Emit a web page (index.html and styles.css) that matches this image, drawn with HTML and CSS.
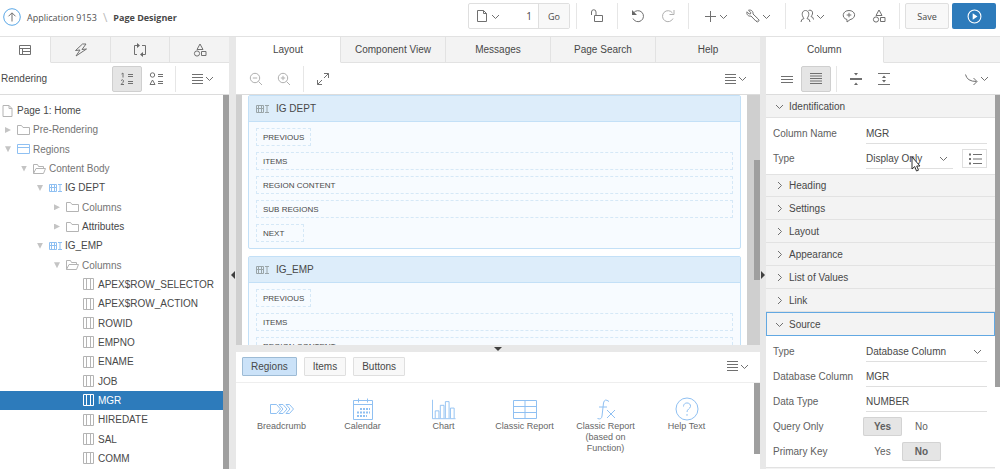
FILE: index.html
```html
<!DOCTYPE html>
<html lang="en">
  <head>
    <meta charset="UTF-8" />
    <meta name="viewport" content="width=device-width, initial-scale=1.0" />
    <title>Page Designer</title>
    <link rel="stylesheet" href="styles.css">
  </head>
  <body>
    <svg class="sprite" aria-hidden="true">
      <symbol id="chevron" viewBox="0 0 9 9"><path d="M1 3l3.500 3.500L8 3" /></symbol>
      <symbol id="page" viewBox="0 0 12 14"><path d="M1.500 1.500h6l3 3v8h-9zM7.500 1.500v3h3" /></symbol>
      <symbol id="menu" viewBox="0 0 12 12"><path d="M1 1.500h11M1 4.500h11M1 7.500h11M1 10.500h11" /></symbol>
      <symbol id="shapes" viewBox="0 0 14 14"><path d="M7 1l3 5.500H4zM8.500 8.500h4.500v4H8.500z" /><circle cx="4" cy="10.500" r="2.600" /></symbol>
      <symbol id="folder" viewBox="0 0 13 12"><path d="M.5 10.500v-9h4l1.500 2h6.500v7z" /></symbol>
      <symbol id="folder-open" viewBox="0 0 13 12"><path d="M.5 10.500v-9h4l1 2h5v2M.5 10.500L3 5.500h9.500l-2 5z" /></symbol>
      <symbol id="region" viewBox="0 0 13 12"><path d="M.5 1.500h12v9H.5zM.5 4.500h12" /></symbol>
      <symbol id="grid" viewBox="0 0 13 12"><path d="M.5 2.500h7v7h-7zM.5 5.500h7M2.500 2.500v7M5.500 2.500v7M9 2.500h4M9 9.500h4M11 2.500v7" /></symbol>
      <symbol id="column" viewBox="0 0 13 12"><path d="M1.500 .5h10v11h-10zM4.500 .5v11M8.500 .5v11" /></symbol>
    </svg>

    <header class="header">
      <nav class="breadcrumb">
        <a class="up" href="#" aria-label="Up">
          <svg viewBox="0 0 18 18"><circle cx="9" cy="9" r="8.300" /><path d="M9 13.500V5M5.500 8.300L9 4.800l3.500 3.500" /></svg>
        </a>
        <a href="#">Application 9153</a>
        <span class="slash">\</span>
        <strong>Page Designer</strong>
      </nav>

      <div class="actions">
        <div class="page-select">
          <button class="page-menu" aria-label="Page finder">
            <svg class="icon"><use href="#page" /></svg><svg class="chev"><use href="#chevron" /></svg>
          </button>
          <input class="page-number" type="text" value="1" aria-label="Page number" />
          <button class="go">Go</button>
        </div>
        <span class="sep"></span>
        <button class="tool" aria-label="Lock"><svg class="icon" viewBox="0 0 14 14"><path d="M4.500 6.500h8v6h-8zM1.500 6V3a2 2 0 0 1 4.500 0v3.500" /></svg></button>
        <span class="sep"></span>
        <button class="tool" aria-label="Undo"><svg class="icon" viewBox="0 0 14 14"><path d="M2.500 4A5.500 5.500 0 1 1 2 9.500" /><path class="fill" d="M1 1v5h5z" /></svg></button>
        <button class="tool faded" aria-label="Redo"><svg class="icon" viewBox="0 0 14 14"><path d="M11.500 4A5.500 5.500 0 1 0 12 9.500M13 1v4.500H8.500" /></svg></button>
        <span class="sep"></span>
        <button class="tool-menu" aria-label="Create"><svg class="icon" viewBox="0 0 14 14"><path d="M2 7.500h11M7.500 2v11" /></svg><svg class="chev"><use href="#chevron" /></svg></button>
        <button class="tool-menu" aria-label="Utilities"><svg class="icon" viewBox="0 0 14 14"><path d="M2.500 1.300L4.800 3.500 4.500 4.800 3.200 5 1 2.800C.2 5.500 2.500 7.700 5 7L10 12.200Q11.500 13.500 12.600 12.300T12.200 10L7 5C7.500 2.500 5.200.3 2.500 1.300zM11 11.200v.5" /></svg><svg class="chev"><use href="#chevron" /></svg></button>
        <span class="sep"></span>
        <button class="tool-menu" aria-label="Team"><svg class="icon" viewBox="0 0 14 14"><path d="M1 13q0-3 3-3.500C1 6 2 1.500 5.500 1.500S10 6 7 9.500q3 .5 3 3.500M8.500 1.500c4-1.500 5.500 3 2.500 6q2.500.5 2.500 3" /></svg><svg class="chev"><use href="#chevron" /></svg></button>
        <button class="tool" aria-label="Comments"><svg class="icon" viewBox="0 0 14 14"><path d="M5 10.500C-1 9 .5 1.500 7 1.500s8 7.500 1 9.200L5 13zM7 3.800v4.500M4.700 6h4.600" /></svg></button>
        <button class="tool" aria-label="Shared components"><svg class="icon"><use href="#shapes" /></svg></button>
        <span class="sep"></span>
        <button class="save">Save</button>
        <button class="run" aria-label="Save and run page"><svg viewBox="0 0 14 14"><circle cx="7" cy="7" r="6" /><path class="fill" d="M5.300 4v6l4.500-3z" /></svg></button>
      </div>
    </header>

    <main class="designer">
      <section class="panel side">
        <div class="tabs icon-tabs">
          <button class="tab active" aria-label="Rendering"><svg class="icon" viewBox="0 0 14 14"><path d="M1.500 2.500h11v9h-11zM1.500 5.500h11M4.500 5.500v6M4.500 8.500h8" /></svg></button>
          <button class="tab" aria-label="Dynamic Actions"><svg class="icon" viewBox="0 0 14 14"><path d="M8.500 1L1.500 7.500l4.500-.5-4 6L12.500 6 8 6.500 12 1z" /></svg></button>
          <button class="tab" aria-label="Processing"><svg class="icon" viewBox="0 0 14 14"><path d="M5 2.500H1.500v9H4M9 2.500h3.500v9H9" /><path class="fill" d="M4 0v5l3-2.500zM10 9v5l-3-2.500z" /></svg></button>
          <button class="tab" aria-label="Shared Components"><svg class="icon"><use href="#shapes" /></svg></button>
        </div>
        <div class="toolbar tree-tools">
          <h2>Rendering</h2>
          <button class="tool push pressed" aria-label="Group by order">
            <svg class="icon" viewBox="0 0 14 14"><path d="M1.500 2L3 1v4.500M1 8.500q2-1.500 2.500 0T1 12.500h3M8 2.500h5M8 4.500h5M8 9.500h5M8 11.500h5" /></svg>
          </button>
          <button class="tool" aria-label="Group by component type">
            <svg class="icon" viewBox="0 0 14 14"><circle cx="3.500" cy="3" r="2.200" /><path d="M3.500 8L6 12.500H1zM9 2.500h5M9 4.500h5M9 9.500h5M9 11.500h5" /></svg>
          </button>
          <span class="sep"></span>
          <button class="tool-menu" aria-label="Tree menu"><svg class="icon small"><use href="#menu" /></svg><svg class="chev"><use href="#chevron" /></svg></button>
        </div>
        <div class="tree-wrap">
          <ul class="tree" role="tree">
            <li class="root" role="treeitem"><svg class="node"><use href="#page" /></svg>Page 1: Home</li>
            <li class="level-1 muted" role="treeitem"><i class="arrow"></i><svg class="node"><use href="#folder" /></svg>Pre-Rendering</li>
            <li class="level-1 muted" role="treeitem"><i class="arrow open"></i><svg class="node blue"><use href="#region" /></svg>Regions</li>
            <li class="level-2 muted" role="treeitem"><i class="arrow open"></i><svg class="node"><use href="#folder-open" /></svg>Content Body</li>
            <li class="level-3" role="treeitem"><i class="arrow open"></i><svg class="node blue"><use href="#grid" /></svg>IG DEPT</li>
            <li class="level-4 muted" role="treeitem"><i class="arrow"></i><svg class="node"><use href="#folder" /></svg>Columns</li>
            <li class="level-4" role="treeitem"><i class="arrow"></i><svg class="node"><use href="#folder" /></svg>Attributes</li>
            <li class="level-3" role="treeitem"><i class="arrow open"></i><svg class="node blue"><use href="#grid" /></svg>IG_EMP</li>
            <li class="level-4 muted" role="treeitem"><i class="arrow open"></i><svg class="node"><use href="#folder-open" /></svg>Columns</li>
            <li class="level-5" role="treeitem"><i class="arrow none"></i><svg class="node"><use href="#column" /></svg>APEX$ROW_SELECTOR</li>
            <li class="level-5" role="treeitem"><i class="arrow none"></i><svg class="node"><use href="#column" /></svg>APEX$ROW_ACTION</li>
            <li class="level-5" role="treeitem"><i class="arrow none"></i><svg class="node"><use href="#column" /></svg>ROWID</li>
            <li class="level-5" role="treeitem"><i class="arrow none"></i><svg class="node"><use href="#column" /></svg>EMPNO</li>
            <li class="level-5" role="treeitem"><i class="arrow none"></i><svg class="node"><use href="#column" /></svg>ENAME</li>
            <li class="level-5" role="treeitem"><i class="arrow none"></i><svg class="node"><use href="#column" /></svg>JOB</li>
            <li class="level-5 selected" role="treeitem" aria-selected="true"><i class="arrow none"></i><svg class="node"><use href="#column" /></svg>MGR</li>
            <li class="level-5" role="treeitem"><i class="arrow none"></i><svg class="node"><use href="#column" /></svg>HIREDATE</li>
            <li class="level-5" role="treeitem"><i class="arrow none"></i><svg class="node"><use href="#column" /></svg>SAL</li>
            <li class="level-5" role="treeitem"><i class="arrow none"></i><svg class="node"><use href="#column" /></svg>COMM</li>
          </ul>
          <div class="thumb"></div>
        </div>
      </section>

      <div class="splitter"><i class="handle left"></i></div>

      <section class="panel center">
        <div class="tabs">
          <button class="tab active">Layout</button>
          <button class="tab">Component View</button>
          <button class="tab">Messages</button>
          <button class="tab">Page Search</button>
          <button class="tab">Help</button>
        </div>
        <div class="toolbar layout-tools">
          <button class="tool faded" aria-label="Zoom out"><svg class="icon" viewBox="0 0 14 14"><circle cx="6" cy="6" r="4.700" /><path d="M9.500 9.500L13 13M3.800 6h4.400" /></svg></button>
          <button class="tool faded" aria-label="Zoom in"><svg class="icon" viewBox="0 0 14 14"><circle cx="6" cy="6" r="4.700" /><path d="M9.500 9.500L13 13M3.800 6h4.400M6 3.800v4.400" /></svg></button>
          <span class="sep"></span>
          <button class="tool" aria-label="Expand"><svg class="icon" viewBox="0 0 14 14"><path d="M8 1.500h4.500V6M12.500 1.500L8 6M1.500 8v4.500H6M1.500 12.500L6 8" /></svg></button>
          <button class="tool-menu push" aria-label="Layout menu"><svg class="icon small"><use href="#menu" /></svg><svg class="chev"><use href="#chevron" /></svg></button>
        </div>

        <div class="canvas">
          <div class="gutter"></div>
          <div class="regions">
            <article class="region">
              <h3><svg class="node"><use href="#grid" /></svg>IG DEPT</h3>
              <div class="slots">
                <div class="slot short">PREVIOUS</div>
                <div class="slot">ITEMS</div>
                <div class="slot">REGION CONTENT</div>
                <div class="slot">SUB REGIONS</div>
                <div class="slot short">NEXT</div>
              </div>
            </article>
            <article class="region">
              <h3><svg class="node"><use href="#grid" /></svg>IG_EMP</h3>
              <div class="slots">
                <div class="slot short">PREVIOUS</div>
                <div class="slot">ITEMS</div>
                <div class="slot">REGION CONTENT</div>
              </div>
            </article>
          </div>
          <div class="gutter wide"><div class="thumb"></div></div>
        </div>

        <div class="splitter horizontal"><i class="handle down"></i></div>

        <div class="gallery">
          <div class="gallery-bar">
            <button class="pill active">Regions</button>
            <button class="pill">Items</button>
            <button class="pill">Buttons</button>
            <button class="tool-menu push" aria-label="Gallery menu"><svg class="icon small"><use href="#menu" /></svg><svg class="chev"><use href="#chevron" /></svg></button>
          </div>
          <div class="gallery-body">
            <ul class="components">
              <li><svg viewBox="0 0 24 24"><path d="M.5 7.500h6l4 4.500-4 4.500h-6zM9 7.500h4l4 4.500-4 4.500H9l4-4.500zM16 7.500h3.500l4 4.500-4 4.500H16l4-4.500z" /></svg>Breadcrumb</li>
              <li><svg viewBox="0 0 24 24"><path d="M2.500 3.500h19v19h-19zM2.500 7.500h19M7.500 1.500v4M16.500 1.500v4" /><path class="dots" d="M9 12h10M6 15.500h13M6 19h10" /></svg>Calendar</li>
              <li><svg viewBox="0 0 26 24"><path d="M.5 2v20.500h25M3.500 22v-8h4v8M9 22V8h4v14M14.500 22V4h4v18M20 22V11h4v11" /></svg>Chart</li>
              <li><svg viewBox="0 0 24 24"><path d="M.5 3.500h23v18H.5zM.5 9.500h23M.5 15.500h23M12 3.500v18" /></svg>Classic Report</li>
              <li><svg viewBox="0 0 24 24"><path d="M15 4.500Q10.500 1 9.500 6L8 19q-.5 4-4.500 2.500M5 10h8M13 13l8 8M21 13l-8 8" /></svg>Classic Report (based on Function)</li>
              <li><svg viewBox="0 0 24 24"><circle cx="12" cy="12" r="11" /><path d="M8.500 9.500c0-5 7.500-4.500 7 0-.5 2.500-3.500 2.500-3.500 5.500M12 17v1.800" /></svg>Help Text</li>
            </ul>
            <div class="thumb"></div>
          </div>
        </div>
      </section>

      <div class="splitter"><i class="handle right"></i></div>

      <section class="panel side">
        <div class="tabs property-tabs">
          <button class="tab active">Column</button>
        </div>
        <div class="toolbar property-tools">
          <button class="tool" aria-label="Show common"><svg class="icon" viewBox="0 0 14 14"><path d="M1 4.500h12M1 7.500h12M1 10.500h12" /></svg></button>
          <button class="tool pressed" aria-label="Show all"><svg class="icon" viewBox="0 0 14 14"><path d="M1 1.500h12M1 4h12M1 6.500h12M1 9h12M1 11.500h12" /></svg></button>
          <span class="sep"></span>
          <button class="tool" aria-label="Collapse all"><svg class="icon" viewBox="0 0 14 14"><path class="thick" d="M1 7h12" /><path class="fill" d="M5 1h4L7 3.500zM5 13h4l-2-2.500z" /></svg></button>
          <button class="tool" aria-label="Expand all"><svg class="icon" viewBox="0 0 14 14"><path d="M1 1.500h12M1 12.500h12" /><path class="fill" d="M5 6h4L7 3.500zM5 8h4l-2 2.500z" /></svg></button>
          <button class="tool-menu push" aria-label="Go to group"><svg class="icon" viewBox="0 0 14 14"><path d="M1.500 2.500Q3 9.500 12.500 9.500M9.500 6l3.500 3.500L9.500 13" /></svg><svg class="chev"><use href="#chevron" /></svg></button>
        </div>

        <div class="properties">
          <form class="property-list">
            <button type="button" class="group open"><svg class="chev"><use href="#chevron" /></svg>Identification</button>
            <div class="fields">
              <div class="field">
                <label for="column-name">Column Name</label>
                <input type="text" id="column-name" value="MGR" />
              </div>
              <div class="field">
                <label for="type">Type</label>
                <div class="control">
                  <div class="select">
                    <select id="type"><option>Display Only</option></select>
                    <svg class="chev"><use href="#chevron" /></svg>
                    <svg class="pointer" viewBox="0 0 10 16"><path d="M1 1v12l2.700-2.500L5.500 15l2-.8-1.800-4.200H9z" /></svg>
                  </div>
                  <button type="button" class="list-btn" aria-label="Choose type"><svg class="icon" viewBox="0 0 14 14"><path d="M5 2.500h9M5 7h9M5 11.500h9" /><path class="thick" d="M1 2.500h2M1 7h2M1 11.500h2" /></svg></button>
                </div>
              </div>
            </div>
            <button type="button" class="group"><svg class="chev"><use href="#chevron" /></svg>Heading</button>
            <button type="button" class="group"><svg class="chev"><use href="#chevron" /></svg>Settings</button>
            <button type="button" class="group"><svg class="chev"><use href="#chevron" /></svg>Layout</button>
            <button type="button" class="group"><svg class="chev"><use href="#chevron" /></svg>Appearance</button>
            <button type="button" class="group"><svg class="chev"><use href="#chevron" /></svg>List of Values</button>
            <button type="button" class="group"><svg class="chev"><use href="#chevron" /></svg>Link</button>
            <button type="button" class="group open focused"><svg class="chev"><use href="#chevron" /></svg>Source</button>
            <div class="fields">
              <div class="field">
                <label for="source-type">Type</label>
                <div class="select">
                  <select id="source-type"><option>Database Column</option></select>
                  <svg class="chev"><use href="#chevron" /></svg>
                </div>
              </div>
              <div class="field">
                <label for="database-column">Database Column</label>
                <input type="text" id="database-column" value="MGR" />
              </div>
              <div class="field">
                <label for="data-type">Data Type</label>
                <input type="text" id="data-type" value="NUMBER" />
              </div>
              <div class="field" role="radiogroup" aria-labelledby="query-only">
                <span id="query-only">Query Only</span>
                <div class="switch">
                  <label><input type="radio" name="query-only" checked />Yes</label>
                  <label><input type="radio" name="query-only" />No</label>
                </div>
              </div>
              <div class="field" role="radiogroup" aria-labelledby="primary-key">
                <span id="primary-key">Primary Key</span>
                <div class="switch">
                  <label><input type="radio" name="primary-key" />Yes</label>
                  <label><input type="radio" name="primary-key" checked />No</label>
                </div>
              </div>
            </div>
            <button type="button" class="group"><svg class="chev"><use href="#chevron" /></svg></button>
          </form>
          <div class="thumb"></div>
        </div>
      </section>
    </main>
  </body>
</html>
```
FILE: styles.css
```css
* {
  box-sizing: border-box;
}
body {
  margin: 0;
  height: 100vh;
  display: flex;
  flex-direction: column;
  overflow: hidden;
  background-color: #fff;
  color: #484848;
  font-family: "Liberation Sans", Arial, sans-serif;
  font-size: 10px;
}
button,
input,
select {
  font: inherit;
  color: inherit;
  margin: 0;
  padding: 0;
  border: 0;
  background: none;
}
h2,
h3,
ul {
  margin: 0;
  padding: 0;
  font-size: 10px;
  font-weight: normal;
  list-style: none;
}
svg {
  fill: none;
  stroke: #707070;
  stroke-width: 1;
  flex: none;
}
.sprite {
  position: absolute;
  width: 0;
  height: 0;
}
.icon {
  width: 14px;
  height: 14px;
}
.icon.small {
  width: 12px;
  height: 12px;
}
.chev {
  width: 9px;
  height: 9px;
}
.fill {
  fill: #666;
  stroke: none;
}
.thick {
  stroke-width: 2;
}

/* header */
.header {
  display: flex;
  justify-content: space-between;
  height: 37px;
  padding: 3px 4px 8px 3px;
  border-bottom: 1px solid #e2e2e2;
  font-family: "Open Sans", sans-serif;
}
.breadcrumb {
  display: flex;
  align-items: center;
  gap: 6px;
  height: 28px;
  font-size: 9px;
}
.breadcrumb a {
  color: #505050;
  text-decoration: none;
}
.breadcrumb .up,
.up svg {
  width: 18px;
  height: 18px;
}
.up circle {
  stroke: #5aa7e6;
}
.slash {
  color: #bbb;
  font-size: 12px;
}
.actions {
  display: flex;
  align-items: center;
  height: 26px;
}
.page-select {
  display: flex;
  width: 102px;
  height: 26px;
  border: 1px solid #dfdfdf;
  border-radius: 2px;
}
.page-menu {
  display: flex;
  align-items: center;
  gap: 2px;
  padding-left: 6px;
}
.page-number {
  flex: 1;
  width: 0;
  text-align: right;
  padding-right: 6px;
}
.go {
  width: 31px;
  border-left: 1px solid #dfdfdf;
  background-color: #f8f8f8;
  font-size: 9px;
}
.sep {
  width: 1px;
  height: 26px;
  margin: 0 5px;
  background-color: #e6e6e6;
}
.page-select + .sep {
  margin-left: 6px;
}
.tool {
  display: flex;
  align-items: center;
  justify-content: center;
  width: 30px;
  height: 26px;
}
.tool-menu {
  display: flex;
  align-items: center;
  justify-content: center;
  gap: 2px;
  width: 43px;
  height: 26px;
}
.faded svg {
  stroke: #b0b0b0;
}
.push {
  margin-left: auto;
}
.save {
  width: 44px;
  height: 26px;
  margin-right: 3px;
  border: 1px solid #dfdfdf;
  border-radius: 2px;
  background-color: #f8f8f8;
  font-size: 9px;
}
.run {
  display: flex;
  align-items: center;
  justify-content: center;
  width: 44px;
  height: 26px;
  border-radius: 2px;
  background-color: #2d7bbb;
}
.run svg {
  width: 15px;
  height: 15px;
  stroke: #fff;
}
.run .fill {
  fill: #fff;
}

/* panels */
.designer {
  flex: 1;
  min-height: 0;
  display: grid;
  grid-template-columns: 229px 7px minmax(0, 1fr) 6px 234px;
}
.panel {
  display: flex;
  flex-direction: column;
  min-width: 0;
  min-height: 0;
}
.splitter {
  display: flex;
  align-items: center;
  justify-content: center;
  background-color: #e8e8e8;
  padding-top: 44px;
}
.splitter.horizontal {
  height: 7px;
  padding: 0;
}
.handle {
  border: 4px solid transparent;
}
.handle.left {
  border-left-width: 0;
  border-right-color: #404040;
}
.handle.right {
  border-right-width: 0;
  border-left-color: #404040;
}
.handle.down {
  border-bottom-width: 0;
  border-top-color: #404040;
}
.tabs {
  display: flex;
  height: 26px;
  background-color: #f3f3f3;
}
.tab {
  flex: 1 1 0;
  display: flex;
  align-items: center;
  justify-content: center;
  border-right: 1px solid #e2e2e2;
  border-bottom: 1px solid #e2e2e2;
}
.tab.active {
  background-color: #fff;
  border-bottom-color: #fff;
}
.center .tab:last-child,
.icon-tabs .tab:last-child {
  border-right: 0;
}
.icon-tabs .tab {
  flex-grow: 7;
}
.icon-tabs .active {
  flex-grow: 6;
}
.property-tabs::after {
  content: "";
  flex: 1;
  border-bottom: 1px solid #e2e2e2;
}
.toolbar {
  display: flex;
  align-items: center;
  height: 32px;
  border-bottom: 1px solid #dcdcdc;
}
.toolbar h2 {
  padding-left: 1px;
}
.toolbar .tool {
  width: 28px;
}
.toolbar .pressed {
  width: 30px;
  background-color: #e5e5e5;
  border: 1px solid #cfcfcf;
  border-radius: 2px;
}
.tree-tools {
  padding-right: 5px;
}
.layout-tools {
  padding: 0 3px 0 6px;
}
.property-tools {
  padding: 0 2px 0 7px;
}
.thumb {
  background-color: #9f9f9f;
}

/* tree */
.tree-wrap {
  flex: 1;
  min-height: 0;
  display: flex;
}
.tree-wrap .thumb {
  width: 6px;
}
.tree {
  flex: 1;
  display: grid;
  grid-auto-rows: 1fr;
  padding: 6px 0 1px;
}
.tree li {
  display: flex;
  align-items: center;
  white-space: nowrap;
}
.tree .root {
  padding-left: 1px;
}
.tree .level-2 {
  padding-left: 16px;
}
.tree .level-3 {
  padding-left: 32px;
}
.tree .level-4 {
  padding-left: 49px;
}
.tree .level-5 {
  padding-left: 65px;
}
.tree .muted {
  color: #747474;
}
.node {
  width: 13px;
  height: 12px;
  margin-right: 3px;
  stroke: #b4b4b4;
}
.root .node {
  height: 14px;
}
.node.blue {
  stroke: #8fc0f2;
}
.tree .selected {
  background-color: #2d7bbb;
  color: #fff;
}
.selected .node {
  stroke: #fff;
}
.arrow {
  width: 6px;
  height: 6px;
  margin: 0 6px 0 5px;
  background-color: #c4c4c4;
  clip-path: polygon(0 0, 100% 50%, 0 100%);
}
.arrow.open {
  clip-path: polygon(0 0, 100% 0, 50% 100%);
}
.arrow.none {
  visibility: hidden;
}

/* layout canvas */
.canvas {
  flex: 1;
  min-height: 0;
  display: flex;
  overflow: hidden;
}
.gutter {
  width: 6px;
  background-color: #cfcfcf;
}
.gutter.wide {
  width: 13px;
  display: flex;
  justify-content: flex-end;
  align-items: flex-start;
}
.gutter .thumb {
  width: 6px;
  height: 48%;
  margin-top: 65px;
}
.regions {
  flex: 1;
  padding: 0 6px;
}
.region {
  margin-bottom: 7px;
  border: 1px solid #c3e0f7;
  border-radius: 2px;
  background-color: #f7fbff;
}
.region h3 {
  display: flex;
  align-items: center;
  height: 26px;
  padding-left: 7px;
  border-bottom: 1px solid #c3e0f7;
  background-color: #ddedfa;
}
.region h3 .node {
  margin-right: 7px;
  stroke: #9aa5a8;
}
.slots {
  display: flex;
  flex-direction: column;
  gap: 6px;
  padding: 6px 7px;
}
.slot {
  height: 18px;
  padding: 0 6px;
  border: 1px dashed #d5e8f7;
  font-size: 8px;
  line-height: 17px;
}
.slot.short {
  align-self: flex-start;
  min-width: 48px;
}

/* component gallery */
.gallery {
  height: 117px;
}
.gallery-bar {
  display: flex;
  align-items: center;
  gap: 7px;
  height: 31px;
  padding: 0 1px 2px 6px;
  border-bottom: 1px solid #eee;
}
.pill {
  height: 19px;
  padding: 0 8px;
  border: 1px solid #dfdfdf;
  border-radius: 1px;
  background-color: #f8f8f8;
}
.pill.active {
  background-color: #cbe2f8;
  border-color: #9dbbd5;
}
.gallery-body {
  display: flex;
  justify-content: space-between;
}
.components {
  display: flex;
  padding: 14px 0 0 5px;
  color: #666;
  font-size: 9px;
  line-height: 11px;
}
.components li {
  display: flex;
  flex-direction: column;
  align-items: center;
  width: 81px;
  padding: 0 8px;
  text-align: center;
}
.components svg {
  width: 24px;
  height: 24px;
  stroke: #8fc0f2;
}
.components .dots {
  stroke-width: 2;
  stroke-dasharray: 2 1;
}
.gallery .thumb {
  width: 6px;
  height: 71px;
}

/* property editor */
.properties {
  flex: 1;
  min-height: 0;
  display: flex;
  overflow: hidden;
}
.properties .thumb {
  width: 5px;
  height: 78%;
}
.property-list {
  flex: 1;
}
.group {
  display: flex;
  align-items: center;
  gap: 5px;
  width: 100%;
  height: 23px;
  padding-left: 9px;
  border-bottom: 1px solid #e2e2e2;
  background-color: #f3f3f3;
}
.fields + .group {
  border-top: 1px solid #e2e2e2;
}
.group .chev {
  transform: rotate(-90deg);
}
.group.open .chev {
  transform: none;
}
.group.focused {
  height: 24px;
  padding-left: 8px;
  border: 1px solid #62a8e2;
}
.fields {
  padding: 3px 0;
}
.field {
  display: grid;
  grid-template-columns: 93px minmax(0, 1fr);
  align-items: center;
  height: 25px;
  padding: 0 8px 0 7px;
  color: #606060;
}
.field > input,
.select {
  height: 20px;
  border-bottom: 1px solid #dfdfdf;
  color: #484848;
}
.control {
  display: flex;
  align-items: center;
  gap: 9px;
}
.select {
  position: relative;
  flex: 1;
  display: grid;
  align-items: center;
}
.select select {
  grid-area: 1 / 1;
  height: 19px;
  appearance: none;
}
.select .chev {
  grid-area: 1 / 1;
  justify-self: end;
  margin-right: 5px;
  pointer-events: none;
}
.pointer {
  position: absolute;
  left: 45px;
  top: 7px;
  width: 10px;
  height: 16px;
  fill: #fff;
  stroke: #333;
}
.list-btn {
  display: flex;
  align-items: center;
  justify-content: center;
  width: 25px;
  height: 19px;
  border: 1px solid #dfdfdf;
}
.list-btn .icon {
  width: 14px;
  height: 14px;
}
.switch {
  display: flex;
  margin-left: -3px;
}
.switch label {
  width: 39px;
  height: 19px;
  line-height: 19px;
  text-align: center;
}
.switch input {
  position: absolute;
  opacity: 0;
  pointer-events: none;
}
.switch label:has(input:checked) {
  background-color: #e5e5e5;
  box-shadow: inset 0 0 0 1px #d3d3d3;
  border-radius: 2px;
  font-weight: bold;
}
```
